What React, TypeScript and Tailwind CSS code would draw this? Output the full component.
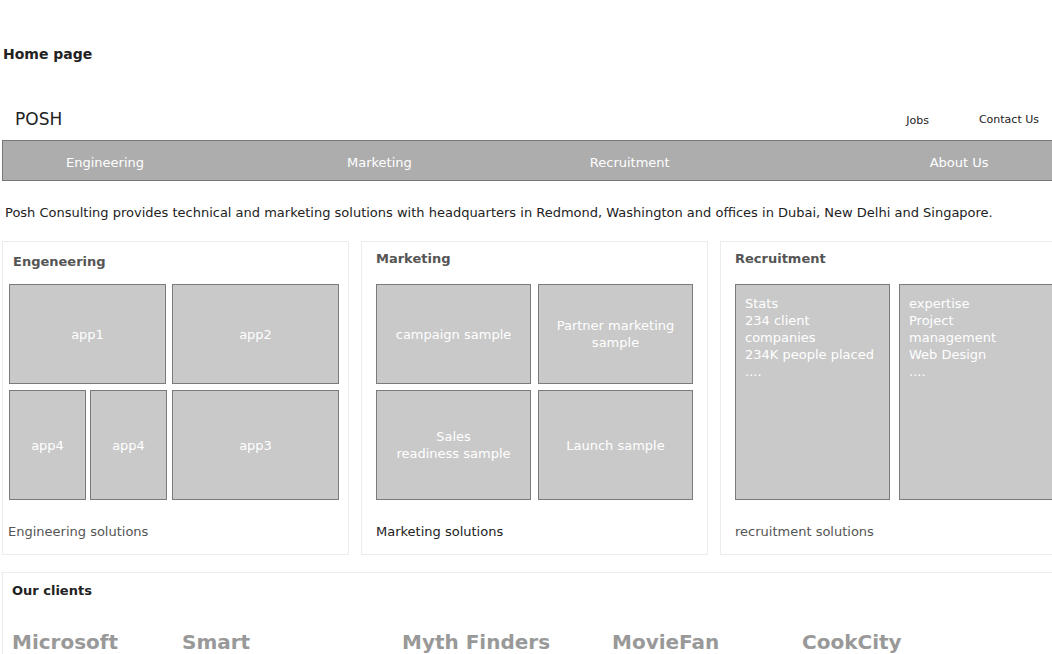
import React from 'react';

const font = { fontFamily: '"DejaVu Sans", Verdana, sans-serif' };

const Tile = ({ className = '', children }: { className?: string; children: React.ReactNode }) => (
  <div className={`flex items-center justify-center text-center border border-[#7b7b7b] bg-[#c9c9c9] text-white text-[13px] leading-[17px] ${className}`}>
    {children}
  </div>
);

const navItems = [
  { label: 'Engineering', cls: 'ml-[63px]' },
  { label: 'Marketing', cls: 'ml-[203px]' },
  { label: 'Recruitment', cls: 'ml-[178px]' },
  { label: 'About Us', cls: 'ml-[260px]' },
];

const clients = [
  { name: 'Microsoft', cls: 'w-[170px]' },
  { name: 'Smart', cls: 'w-[220px]' },
  { name: 'Myth Finders', cls: 'w-[210px]' },
  { name: 'MovieFan', cls: 'w-[190px]' },
  { name: 'CookCity', cls: 'w-[150px]' },
];

export default function App() {
  return (
    <div className="w-[1052px] h-[654px] overflow-hidden bg-white" style={font}>
      <div className="w-[1080px]">
        {/* page title */}
        <h1 className="pt-[44px] pl-[3px] text-[14px] leading-5 font-bold text-[#222]">Home page</h1>

        {/* header */}
        <div className="mt-[38px] flex items-center h-[36px] pl-[15px]">
          <span className="text-[17px] text-[#222]">POSH</span>
          <span className="ml-[844px] mt-[2px] text-[11px] text-[#222]">Jobs</span>
          <span className="ml-[50px] text-[11px] text-[#222]">Contact Us</span>
        </div>

        {/* nav */}
        <nav className="mt-[2px] ml-[2px] h-[41px] pt-[4px] flex items-center bg-[#adadad] border border-[#777]">
          {navItems.map((n) => (
            <span key={n.label} className={`${n.cls} text-white text-[13px]`}>{n.label}</span>
          ))}
        </nav>

        <p className="mt-[23px] pl-[5px] text-[13px] leading-[18px] text-[#222]">
          Posh Consulting provides technical and marketing solutions with headquarters in Redmond, Washington and offices in Dubai, New Delhi and Singapore.
        </p>

        {/* cards */}
        <div className="mt-[19px] ml-[2px] flex gap-[12px]">
          {/* Engineering */}
          <div className="w-[347px] h-[314px] border border-[#ececec] flex flex-col">
            <h2 className="mt-[11px] pl-[10px] text-[13px] leading-[18px] font-bold text-[#555]">Engeneering</h2>
            <div className="mt-[13px] pl-[6px] flex flex-col gap-[6px]">
              <div className="flex gap-[6px]">
                <Tile className="w-[157px] h-[100px]">app1</Tile>
                <Tile className="w-[167px] h-[100px]">app2</Tile>
              </div>
              <div className="flex">
                <Tile className="w-[77px] h-[110px]">app4</Tile>
                <Tile className="w-[77px] h-[110px] ml-[4px]">app4</Tile>
                <Tile className="w-[167px] h-[110px] ml-[5px]">app3</Tile>
              </div>
            </div>
            <p className="mt-[23px] pl-[5px] text-[13px] leading-[18px] text-[#555]">Engineering solutions</p>
          </div>

          {/* Marketing */}
          <div className="w-[347px] h-[314px] border border-[#ececec] flex flex-col">
            <h2 className="mt-[8px] pl-[14px] text-[13px] leading-[18px] font-bold text-[#555]">Marketing</h2>
            <div className="mt-[16px] pl-[14px] flex flex-col gap-[6px]">
              <div className="flex gap-[7px]">
                <Tile className="w-[155px] h-[100px]">campaign sample</Tile>
                <Tile className="w-[155px] h-[100px]">Partner marketing<br />sample</Tile>
              </div>
              <div className="flex gap-[7px]">
                <Tile className="w-[155px] h-[110px]">Sales<br />readiness sample</Tile>
                <Tile className="w-[155px] h-[110px]">Launch sample</Tile>
              </div>
            </div>
            <p className="mt-[23px] pl-[14px] text-[13px] leading-[18px] text-[#222]">Marketing solutions</p>
          </div>

          {/* Recruitment */}
          <div className="w-[347px] h-[314px] border border-[#ececec] flex flex-col">
            <h2 className="mt-[8px] pl-[14px] text-[13px] leading-[18px] font-bold text-[#555]">Recruitment</h2>
            <div className="mt-[16px] pl-[14px] flex gap-[9px]">
              <div className="w-[155px] h-[216px] border border-[#7b7b7b] bg-[#c9c9c9] text-white text-[13px] leading-[17px] px-[9px] pt-[10px]">
                Stats<br />234 client<br />companies<br />234K people placed<br />....
              </div>
              <div className="w-[155px] h-[216px] border border-[#7b7b7b] bg-[#c9c9c9] text-white text-[13px] leading-[17px] px-[9px] pt-[10px]">
                expertise<br />Project<br />management<br />Web Design<br />....
              </div>
            </div>
            <p className="mt-[23px] pl-[14px] text-[13px] leading-[18px] text-[#555]">recruitment solutions</p>
          </div>
        </div>

        {/* clients */}
        <div className="mt-[17px] ml-[2px] border-t border-l border-[#ececec] pt-[9px]">
          <h2 className="pl-[9px] text-[13px] leading-[18px] font-bold text-[#222]">Our clients</h2>
          <div className="mt-[29px] pl-[9px] flex">
            {clients.map((c) => (
              <span key={c.name} className={`${c.cls} shrink-0 text-[20px] leading-[26px] font-bold text-[#999]`}>{c.name}</span>
            ))}
          </div>
        </div>
      </div>
    </div>
  );
}
